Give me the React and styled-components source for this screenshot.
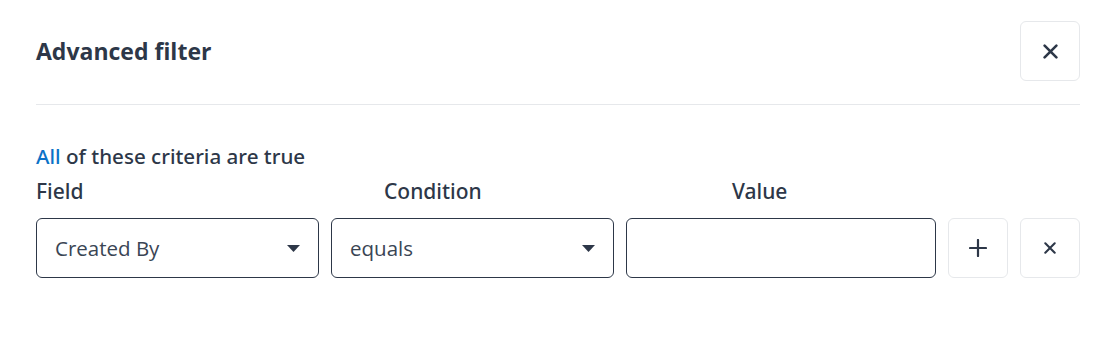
import React from 'react';
import styled, { createGlobalStyle } from 'styled-components';

const GlobalStyle = createGlobalStyle`
  body {
    margin: 0;
    background: #fff;
    font-family: 'Open Sans', 'Noto Sans', sans-serif;
    color: #2d3748;
  }
`;

const Panel = styled.div`
  padding: 21px 23px 0 36px;
`;

const Header = styled.div`
  display: flex;
  align-items: center;
  justify-content: space-between;
  padding-bottom: 23px;
  border-bottom: 1px solid #e6e8eb;
`;

const Title = styled.h2`
  margin: 0;
  font-size: 23px;
  line-height: 30px;
  font-weight: 700;
  color: #2d3748;
`;

const IconButton = styled.button`
  display: flex;
  align-items: center;
  justify-content: center;
  flex: 0 0 60px;
  width: 60px;
  height: 60px;
  padding: 0;
  background: #fff;
  border: 1px solid #e6e8eb;
  border-radius: 6px;
  color: #2d3748;
  cursor: pointer;
`;

const Body = styled.div`
  padding-top: 38px;
`;

const Criteria = styled.div`
  font-family: 'Noto Sans', 'Open Sans', sans-serif;
  font-size: 20.6px;
  line-height: 26px;
  font-weight: 500;
  color: #2d3748;
`;

const Match = styled.span`
  color: #0b72c7;
  cursor: pointer;
`;

const Labels = styled.div`
  display: grid;
  grid-template-columns: repeat(3, 1fr);
  margin-top: 9px;
`;

const Label = styled.div`
  font-family: 'Noto Sans', 'Open Sans', sans-serif;
  font-size: 21px;
  line-height: 26px;
  font-weight: 500;
  color: #2d3748;
`;

const Row = styled.div`
  display: flex;
  gap: 12px;
  margin-top: 14px;
`;

const Select = styled.div`
  display: flex;
  align-items: center;
  justify-content: space-between;
  box-sizing: border-box;
  width: ${p => p.width}px;
  height: 60px;
  padding: 0 18px;
  border: 1px solid #2d3748;
  border-radius: 6px;
  font-size: 20.5px;
  color: #3a4554;
`;

const Input = styled.input`
  box-sizing: border-box;
  width: 310px;
  height: 60px;
  padding: 0 18px;
  border: 1px solid #2d3748;
  border-radius: 6px;
  font-family: inherit;
  font-size: 20px;
  outline: none;
`;

const Caret = () => (
  <svg width="13" height="7" viewBox="0 0 13 7">
    <path d="M0 0h13L6.5 7z" fill="#2d3748" />
  </svg>
);

const CloseIcon = ({ size }) => (
  <svg width={size} height={size} viewBox="0 0 14 14">
    <path d="M1.5 1.5l11 11M12.5 1.5l-11 11" stroke="#2d3748" strokeWidth="2.4" strokeLinecap="round" />
  </svg>
);

const PlusIcon = () => (
  <svg width="18" height="18" viewBox="0 0 18 18">
    <path d="M9 1v16M1 9h16" stroke="#2d3748" strokeWidth="2.2" strokeLinecap="round" />
  </svg>
);

export default function App() {
  return (
    <>
      <GlobalStyle />
      <Panel>
        <Header>
          <Title>Advanced filter</Title>
          <IconButton aria-label="Close">
            <CloseIcon size={15} />
          </IconButton>
        </Header>
        <Body>
          <Criteria>
            <Match>All</Match> of these criteria are true
          </Criteria>
          <Labels>
            <Label>Field</Label>
            <Label>Condition</Label>
            <Label>Value</Label>
          </Labels>
          <Row>
            <Select width={283}>
              Created By
              <Caret />
            </Select>
            <Select width={283}>
              equals
              <Caret />
            </Select>
            <Input />
            <IconButton aria-label="Add">
              <PlusIcon />
            </IconButton>
            <IconButton aria-label="Remove">
              <CloseIcon size={12} />
            </IconButton>
          </Row>
        </Body>
      </Panel>
    </>
  );
}
